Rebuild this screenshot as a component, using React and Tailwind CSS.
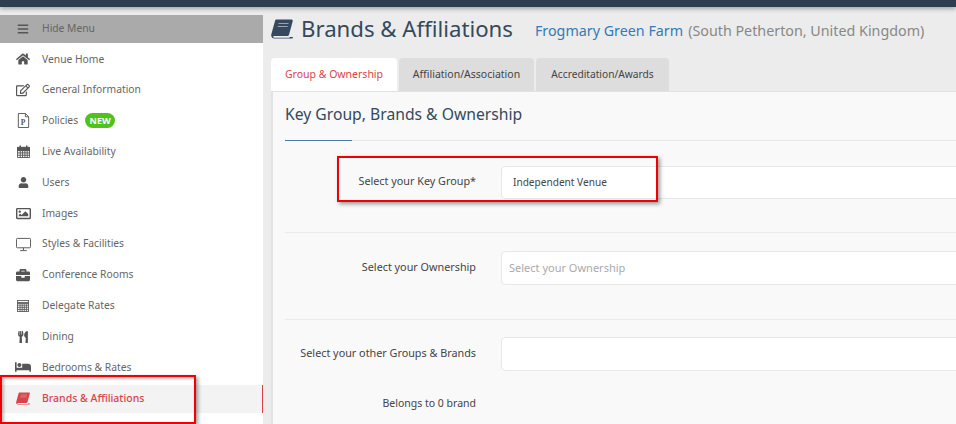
import React from "react";
import { FaBars, FaHome, FaRegEdit, FaUser, FaRegImage, FaBriefcase, FaUtensils, FaBed } from "react-icons/fa";

const PFile = ({ style }) => (
  <svg viewBox="0 0 14 16" style={style} fill="none" stroke="currentColor" strokeWidth="1">
    <path d="M1.5 .5h7.5l3.5 3.5v11.5h-11z M9 .5v3.5h3.5" />
    <text x="4" y="13" fontSize="8" fontWeight="700" fill="currentColor" stroke="none" fontFamily="Liberation Serif, serif">P</text>
  </svg>
);
const Calendar = ({ style }) => (
  <svg viewBox="0 0 14 14" style={style} fill="none" stroke="currentColor" strokeWidth="1">
    <path d="M.5 3h13v10.500H.5z M.5 6h13 M.5 8.500h13 M.5 11h13 M3.500 6v7.500 M6 6v7.500 M8.500 6v7.500 M11 6v7.500" />
    <path d="M.5 2.500h13V6H.5z" fill="currentColor" />
    <path d="M3.500 .5v3 M10.500 .5v3" strokeWidth="1.600" />
  </svg>
);
const Desktop = ({ style }) => (
  <svg viewBox="0 0 16 14" style={style} fill="none" stroke="currentColor" strokeWidth="1">
    <rect x=".5" y=".5" width="15" height="10" rx="1" />
    <path d="M8 10.500v2.500 M4.500 13.500h7" />
  </svg>
);
const Calculator = ({ style }) => (
  <svg viewBox="0 0 14 14" style={style} fill="none" stroke="currentColor" strokeWidth="1">
    <rect x=".5" y=".5" width="13" height="13" />
    <path d="M.5 3.500h13" strokeWidth="2" />
    <path d="M.5 6h13 M.5 8.500h13 M.5 11h13 M3.500 5v8.500 M6 5v8.500 M8.500 5v8.500 M11 5v8.500" />
  </svg>
);
const Book = ({ style, className }) => (
  <svg viewBox="0 0 22 20" style={style} className={className}>
    <path d="M5.200 .5h15.300c1 0 1.500.8 1.200 1.800l-3.600 13.200c-.3 1-1 1.500-2 1.500H3.200c-.9 0-1.300.9-1 1.300.2.3.6.4 1 .4h14.600c.6 0 1-.3 1.200-.8l3 0-.2.8c-.3 .9-1.100 .8-2 .8H3.200C1.200 19.500.3 18 .2 16.500c0-.6 0-1 .2-1.500L4 2c.2-.9.6-1.500 1.200-1.500z" fill="currentColor" />
    <path d="M7.500 4.500h10 M6.700 7.500h10" stroke="#ececec" strokeOpacity=".55" strokeWidth="1" />
  </svg>
);

const items = [
  ["Venue Home", FaHome, 14],
  ["General Information", FaRegEdit, 14],
  ["Policies", PFile, 15],
  ["Live Availability", Calendar, 13],
  ["Users", FaUser, 11],
  ["Images", FaRegImage, 15],
  ["Styles & Facilities", Desktop, 15],
  ["Conference Rooms", FaBriefcase, 14],
  ["Delegate Rates", Calculator, 12],
  ["Dining", FaUtensils, 12],
  ["Bedrooms & Rates", FaBed, 16],
];

function Row({ label, Icon, size }) {
  return (
    <div className="flex items-center h-[30.8px] text-[#666]">
      <span className="w-[42px] flex justify-center pl-[4px] shrink-0 text-[#555]">
        <Icon style={{ width: size, height: size }} />
      </span>
      <span>{label}</span>
      {label === "Policies" && (
        <span className="ml-[7px] h-[15px] w-[30px] rounded-full bg-[#4fc31c] text-white text-[9px] font-bold flex items-center justify-center">NEW</span>
      )}
    </div>
  );
}

function Field({ label, children, h, lift }) {
  return (
    <div className="flex items-center">
      <div className={`w-[191px] text-right text-[10.8px] text-[#444] shrink-0 whitespace-nowrap ${lift ? "pb-[2px]" : ""}`}>{label}</div>
      <div className={`ml-[25px] flex-1 flex items-center bg-white border border-[#e8e8e8] rounded-[4px] ${h}`}>{children}</div>
    </div>
  );
}

export default function App() {
  return (
    <div className="relative w-[956px] h-[424px] overflow-hidden bg-[#ececec] text-[10.3px]" style={{ fontFamily: '"Noto Sans", sans-serif' }}>
      <div className="h-[7px] bg-[#2c3e50] shadow-[0_2px_4px_rgba(0,0,0,0.3)]" />
      <div className="flex h-[417px]">
        <aside className="w-[263px] shrink-0 mt-[8px] bg-white">
          <div className="flex items-center h-[28px] bg-[#aaaaaa] text-[#666]">
            <span className="w-[42px] flex justify-center pl-[4px]"><FaBars className="w-[12px] h-[12px] text-[#555]" /></span>
            <span>Hide Menu</span>
          </div>
          <div className="pt-[1px] pb-[2.200px]">
            {items.map(([l, I, s]) => <Row key={l} label={l} Icon={I} size={s} />)}
          </div>
          <div className="flex items-center h-[28px] bg-[#f3f3f3] text-[#d9444a] text-[10.5px] font-medium border-r border-[#d9444a]">
            <span className="w-[42px] flex justify-center pl-[4px]"><Book style={{ width: 14, height: 13 }} /></span>
            <span>Brands &amp; Affiliations</span>
          </div>
          <div className="flex items-center h-[30px] text-[#555]">
            <span className="w-[42px] flex justify-center pl-[4px]"><FaHome className="w-[14px] h-[14px]" /></span>
          </div>
        </aside>
        <main className="flex-1 min-w-0 pl-[8px]">
          <div className="flex items-center h-[44px] text-[#34495e] whitespace-nowrap">
            <Book className="mr-[8px]" style={{ width: 22, height: 20 }} />
            <span className="text-[22.2px]">Brands &amp; Affiliations</span>
            <span className="ml-[22px] text-[14.3px] text-[#337ab7] pt-[3px]">Frogmary Green Farm</span>
            <span className="ml-[5px] text-[14.3px] text-[#888] pt-[3px]">(South Petherton, United Kingdom)</span>
          </div>
          <div className="flex h-[33px] mt-[7px] gap-[2px] text-[10.5px]">
            <div className="w-[126px] bg-white rounded-t-[4px] flex items-center justify-center text-[#d9444a]">Group &amp; Ownership</div>
            <div className="w-[135px] bg-[#dddddd] rounded-t-[4px] flex items-center justify-center text-[#444]">Affiliation/Association</div>
            <div className="w-[133px] bg-[#dddddd] rounded-t-[4px] flex items-center justify-center text-[#444] text-[10.2px]">Accreditation/Awards</div>
          </div>
          <section className="h-[333px] -mr-[20px] bg-[#f9f9f9] border-t border-l-2 border-[#e2e2e2] pl-[12px]">
            <h2 className="h-[48px] flex items-center text-[15.7px] text-[#34495e] pb-[3px]">Key Group, Brands &amp; Ownership</h2>
            <div className="h-px bg-[#e6e6e6]"><div className="w-[67px] h-px bg-[#4a7ba6]" /></div>
            <div className="pt-[25px] pb-[33px] border-b border-[#ececec]">
              <Field label="Select your Key Group*" h="h-[33px]" lift><span className="pl-[11px] text-[#444] text-[10.1px]">Independent Venue</span></Field>
            </div>
            <div className="pt-[18px] pb-[34px] border-b border-[#ececec]">
              <Field label="Select your Ownership" h="h-[34px]" lift><span className="pl-[7px] text-[#aaa] text-[11px]">Select your Ownership</span></Field>
            </div>
            <div className="pt-[17px]">
              <Field label="Select your other Groups & Brands" h="h-[34px]" lift />
            </div>
            <div className="w-[191px] text-right text-[#444] text-[10.5px] mt-[25px]">Belongs to 0 brand</div>
          </section>
        </main>
      </div>
      <div className="absolute left-0 top-[375px] w-[196px] h-[49px] border-2 border-[#f00000] shadow-[2px_2px_4px_rgba(0,0,0,0.4),inset_2px_2px_3px_rgba(0,0,0,0.25)]" />
      <div className="absolute left-[337px] top-[156px] w-[321px] h-[46px] border-2 border-[#f00000] shadow-[2px_2px_4px_rgba(0,0,0,0.4)]" />
    </div>
  );
}
